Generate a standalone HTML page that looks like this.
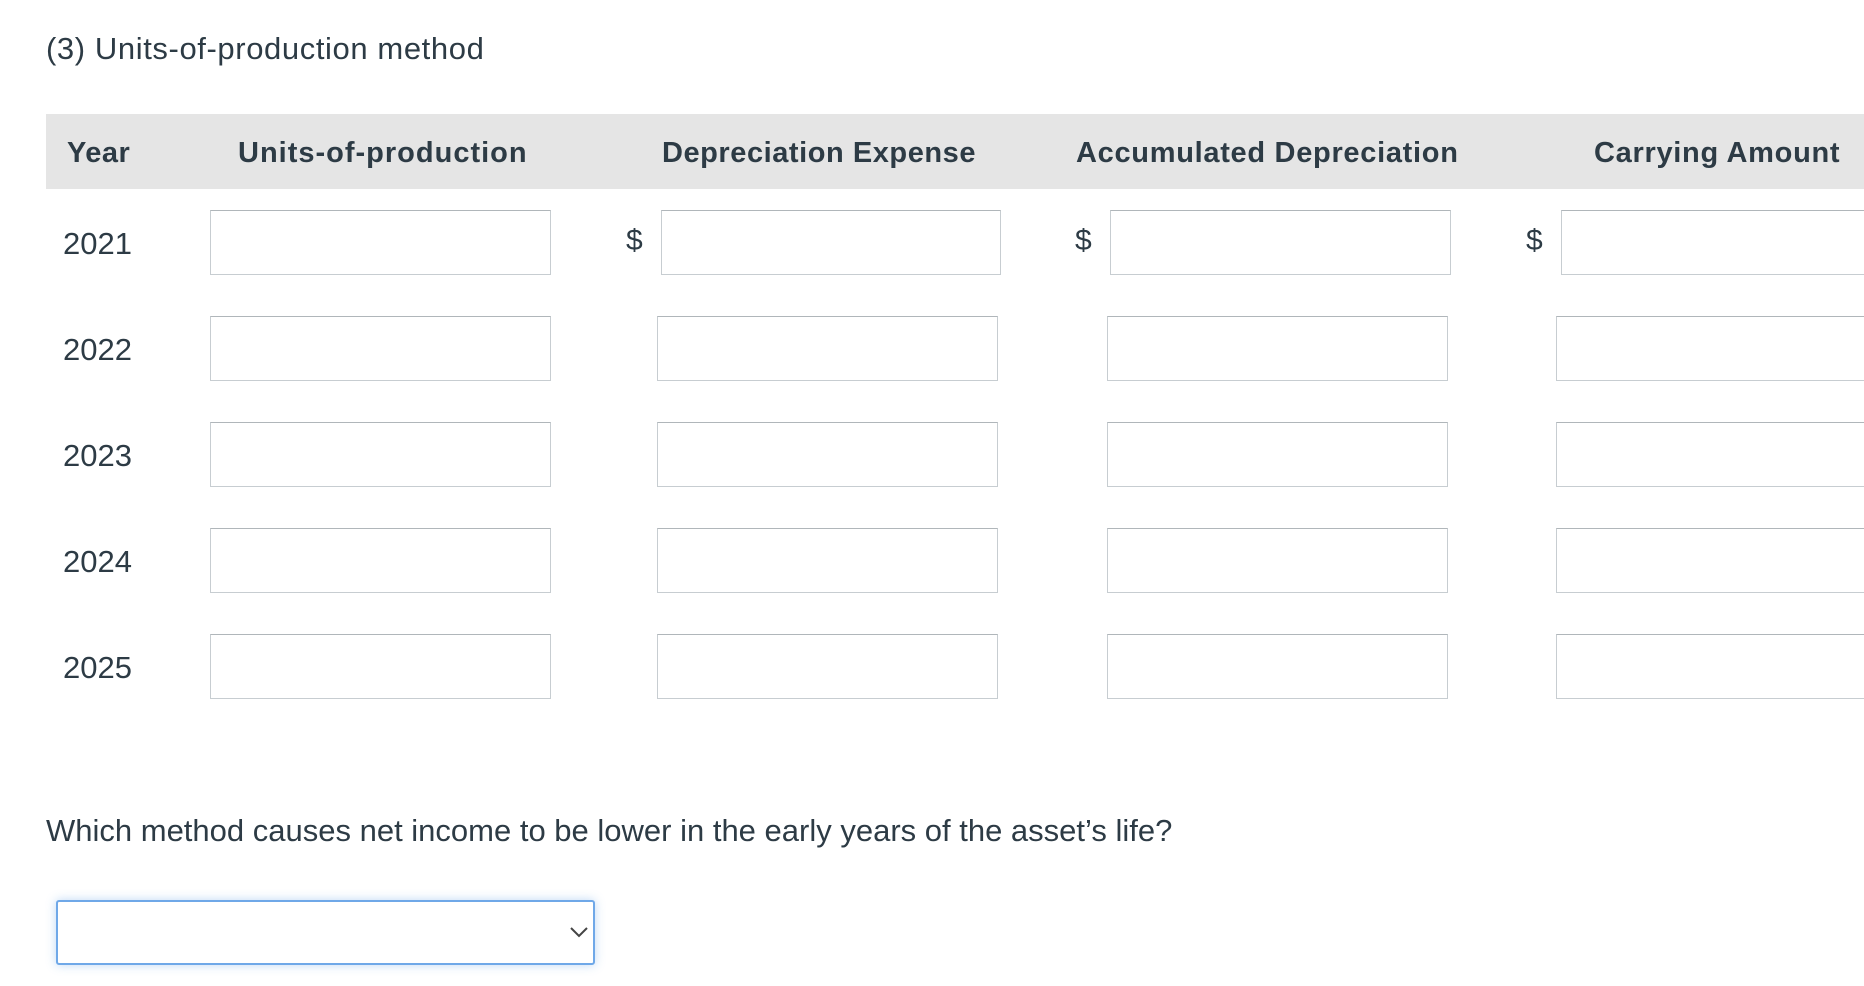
<!DOCTYPE html>
<html><head><meta charset="utf-8"><style>
body{margin:0;width:1864px;height:986px;background:#fff;position:relative;overflow:hidden;font-family:"Liberation Sans",sans-serif;color:#2d3b45}
.a{position:absolute}
.t{color:#2d3b45;white-space:nowrap}
.h{font-size:29px;font-weight:bold;white-space:nowrap;line-height:75px;top:116px}
.box{position:absolute;border:1px solid #c7cdd1;border-top-color:#b0b6ba;background:#fff;box-sizing:border-box;height:65px}
.y{font-size:31px;line-height:65px;left:63px}
.d{font-size:30px;line-height:65px}
</style></head><body>
<div class="a t" style="left:46px;top:31px;font-size:31px;letter-spacing:0.6px">(3) Units-of-production method</div>
<div class="a" style="left:46px;top:114px;width:1818px;height:75px;background:#e5e5e5"></div>
<div class="a h" style="left:67px;letter-spacing:0.5px">Year</div>
<div class="a h" style="left:238px;letter-spacing:1px">Units-of-production</div>
<div class="a h" style="left:662px;letter-spacing:0.55px">Depreciation Expense</div>
<div class="a h" style="left:1076px;letter-spacing:0.7px">Accumulated Depreciation</div>
<div class="a h" style="left:1594px;letter-spacing:0.7px">Carrying Amount</div>

<div class="a y" style="top:211px">2021</div>
<div class="box" style="left:210px;top:210px;width:341px"></div>
<div class="a d" style="left:626px;top:208px">$</div>
<div class="box" style="left:661px;top:210px;width:340px"></div>
<div class="a d" style="left:1075px;top:208px">$</div>
<div class="box" style="left:1110px;top:210px;width:341px"></div>
<div class="a d" style="left:1526px;top:208px">$</div>
<div class="box" style="left:1561px;top:210px;width:320px"></div>

<div class="a y" style="top:317px">2022</div>
<div class="box" style="left:210px;top:316px;width:341px"></div>
<div class="box" style="left:657px;top:316px;width:341px"></div>
<div class="box" style="left:1107px;top:316px;width:341px"></div>
<div class="box" style="left:1556px;top:316px;width:320px"></div>

<div class="a y" style="top:423px">2023</div>
<div class="box" style="left:210px;top:422px;width:341px"></div>
<div class="box" style="left:657px;top:422px;width:341px"></div>
<div class="box" style="left:1107px;top:422px;width:341px"></div>
<div class="box" style="left:1556px;top:422px;width:320px"></div>

<div class="a y" style="top:529px">2024</div>
<div class="box" style="left:210px;top:528px;width:341px"></div>
<div class="box" style="left:657px;top:528px;width:341px"></div>
<div class="box" style="left:1107px;top:528px;width:341px"></div>
<div class="box" style="left:1556px;top:528px;width:320px"></div>

<div class="a y" style="top:635px">2025</div>
<div class="box" style="left:210px;top:634px;width:341px"></div>
<div class="box" style="left:657px;top:634px;width:341px"></div>
<div class="box" style="left:1107px;top:634px;width:341px"></div>
<div class="box" style="left:1556px;top:634px;width:320px"></div>

<div class="a t" style="left:46px;top:813px;font-size:31px">Which method causes net income to be lower in the early years of the asset’s life?</div>
<div class="a" style="left:56px;top:900px;width:539px;height:65px;box-sizing:border-box;border:2px solid #6fa8e8;border-radius:3px;box-shadow:0 0 10px rgba(111,168,232,0.45);background:#fff"></div>
<svg class="a" style="left:568px;top:924px" width="22" height="16" viewBox="0 0 22 16"><path d="M3 4 L11 12 L19 4" fill="none" stroke="#444" stroke-width="2"/></svg>
</body></html>
